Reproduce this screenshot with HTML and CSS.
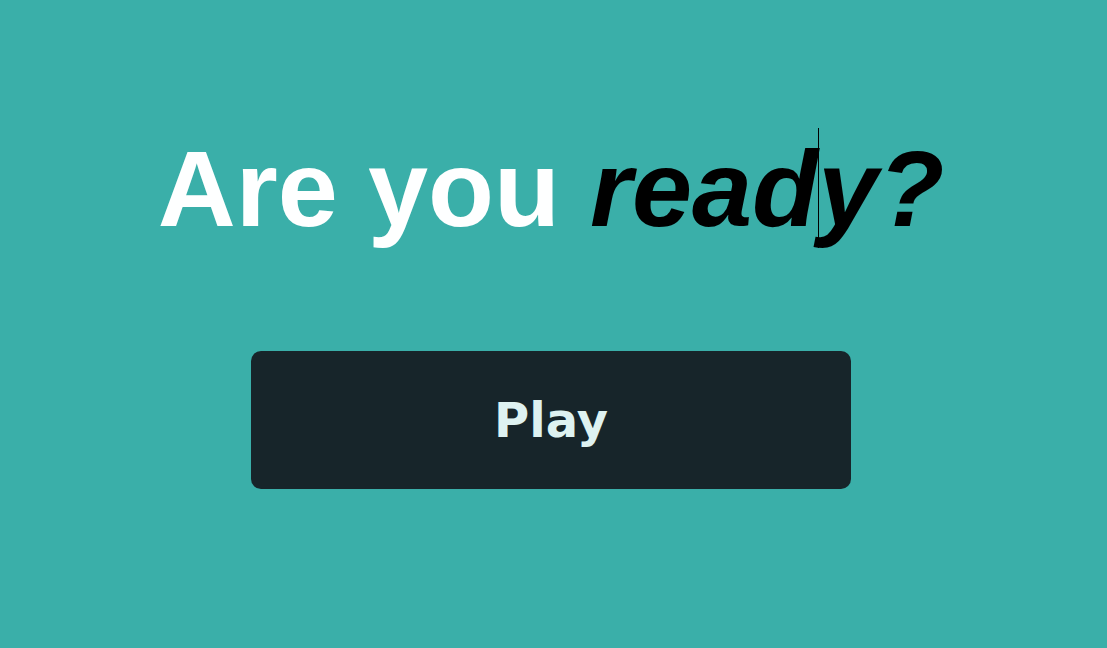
FILE: index.html
```html
<!DOCTYPE html>
<html>
<head>
<meta charset="utf-8">
<link rel="stylesheet" href="styles.css">
</head>
<body>
<main class="screen">
  <h1 class="title">Are you <em class="accent">read<span class="caret-wrap"><span class="caret"></span></span>y?</em></h1>
  <button class="play">Play</button>
</main>
</body>
</html>
```
FILE: styles.css
```css
html, body {
  margin: 0;
  padding: 0;
  background: #3aafa9;
}
.screen {
  width: 1107px;
  height: 648px;
  box-sizing: border-box;
  padding: 135px 5px 0 0;
  display: flex;
  flex-direction: column;
  align-items: center;
}
.title {
  margin: 0;
  font-family: "Liberation Sans", Arial, sans-serif;
  font-weight: 700;
  font-size: 108px;
  line-height: 108px;
  color: #feffff;
  white-space: nowrap;
}
.accent {
  font-style: italic;
  color: #000;
}
.caret-wrap {
  position: relative;
}
.caret {
  position: absolute;
  left: 0;
  top: 0;
  width: 1px;
  height: 120px;
  background: #000;
}
.play {
  margin-top: 108px;
  width: 600px;
  height: 138px;
  border: none;
  border-radius: 10px;
  background: #17252a;
  color: #def2f1;
  font-family: "DejaVu Sans", Verdana, sans-serif;
  font-weight: 700;
  font-size: 48px;
  padding: 0;
}
```
